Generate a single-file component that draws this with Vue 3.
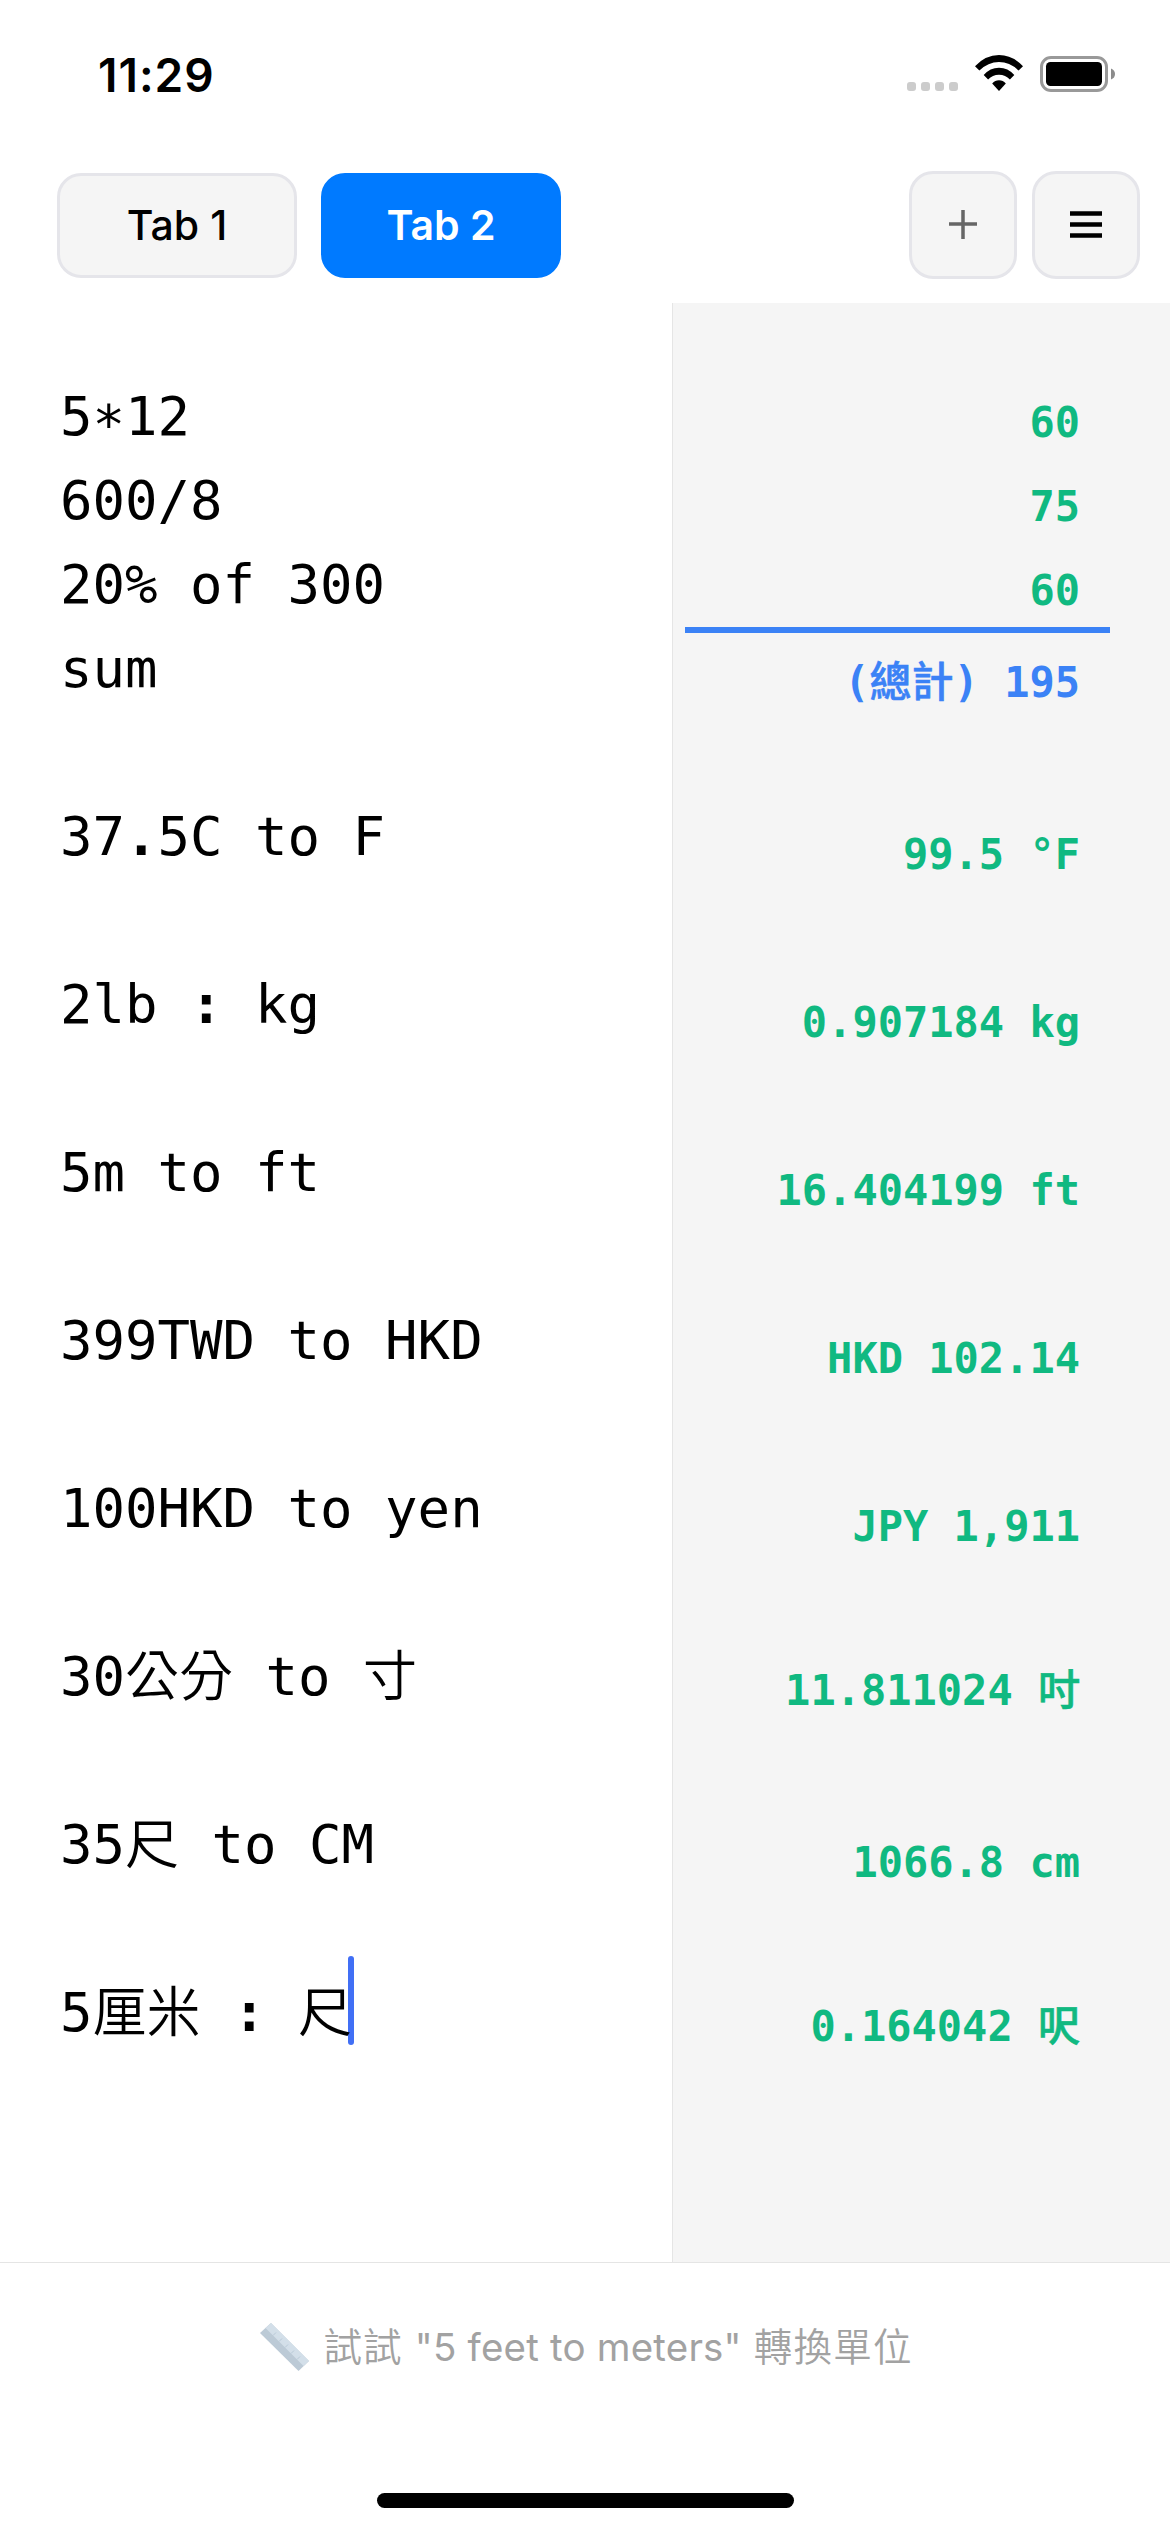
<script setup>
const tabs = [
  { id: 1, label: 'Tab 1', active: false },
  { id: 2, label: 'Tab 2', active: true },
]

const lines = [
  '5*12',
  '600/8',
  '20% of 300',
  'sum',
  '',
  '37.5C to F',
  '',
  '2lb : kg',
  '',
  '5m to ft',
  '',
  '399TWD to HKD',
  '',
  '100HKD to yen',
  '',
  '30公分 to 寸',
  '',
  '35尺 to CM',
  '',
  '5厘米 : 尺',
]

const results = [
  { text: '60' },
  { text: '75' },
  { text: '60' },
  { text: '(總計) 195', kind: 'total' },
  { text: '', kind: 'tall' },
  { text: '99.5 °F' },
  { text: '' },
  { text: '0.907184 kg' },
  { text: '' },
  { text: '16.404199 ft' },
  { text: '' },
  { text: 'HKD 102.14' },
  { text: '' },
  { text: 'JPY 1,911' },
  { text: '', kind: 'short' },
  { text: '11.811024 吋' },
  { text: '', kind: 'tall' },
  { text: '1066.8 cm' },
  { text: '', kind: 'short' },
  { text: '0.164042 呎' },
]

// Splits a line into runs so operators and Han characters can be styled apart.
function runs(text) {
  return text
    .split(/([.:*]|[\u4e00-\u9fff]+)/)
    .filter(Boolean)
    .map((part) => {
      let type = 'plain'
      if (part === '*') type = 'star'
      else if (part === '.' || part === ':') type = 'mark'
      else if (/[\u4e00-\u9fff]/.test(part)) type = 'han'
      return { part, type }
    })
}
</script>

<template>
  <div class="screen">
    <header class="status">
      <span class="time">11:29</span>
      <div class="indicators">
        <div class="dots"><i v-for="n in 4" :key="n"></i></div>
        <svg class="wifi" width="48" height="36" viewBox="0 0 48 36">
          <path d="M0 11.200Q10.500 0 24 0Q37.500 0 48 11.200L43.600 15.600Q35 7 24 7Q13 7 4.400 15.600Z" />
          <path d="M8.700 20Q15 12.700 24 12.700Q33 12.700 39.300 20L34.900 24.400Q30.500 19.700 24 19.700Q17.500 19.700 13.100 24.400Z" />
          <path d="M17.200 28.600Q20 25.300 24 25.300Q28 25.300 30.800 28.600L24 36Z" />
        </svg>
        <svg class="battery" width="75" height="36" viewBox="0 0 75 36">
          <rect x="1.500" y="1.500" width="65" height="33" rx="9.500" fill="none" stroke="#999" stroke-width="3" />
          <rect x="6" y="6" width="56" height="24" rx="4.500" />
          <path d="M71 12.500Q75 14 75 18Q75 22 71 23.500Z" fill="#8c8c8c" />
        </svg>
      </div>
    </header>

    <nav class="toolbar">
      <button v-for="tab in tabs" :key="tab.id" class="tab" :class="{ active: tab.active }">
        <span>{{ tab.label }}</span>
      </button>
      <div class="actions">
        <button class="action" aria-label="Add">
          <svg width="30" height="30" viewBox="0 0 30 30">
            <path d="M1 14H29M15 0V29" fill="none" stroke="#666" stroke-width="3.500" />
          </svg>
        </button>
        <button class="action" aria-label="Menu">
          <svg width="32" height="28" viewBox="0 0 32 28">
            <path d="M0 2.500H32M0 13.500H32M0 24.500H32" fill="none" stroke="#000" stroke-width="4.700" />
          </svg>
        </button>
      </div>
    </nav>

    <main class="sheet">
      <section class="editor">
        <div v-for="(line, i) in lines" :key="i" class="line">
          <span v-for="(run, j) in runs(line)" :key="j" :class="run.type">{{ run.part }}</span>
          <i v-if="i === lines.length - 1" class="caret"></i>
        </div>
      </section>
      <section class="results">
        <template v-for="(row, i) in results" :key="i">
          <div v-if="row.kind === 'total'" class="rule"></div>
          <div class="result" :class="row.kind">
            <span v-for="(run, j) in runs(row.text)" :key="j" :class="run.type">{{ run.part }}</span>
          </div>
        </template>
      </section>
    </main>

    <footer class="footer">
      <div class="hint">
        <svg class="ruler" width="49" height="48" viewBox="0 0 49 48">
          <path d="M0 10L11 0L49 38L38.500 48Z" fill="#bccad6" />
          <path d="M5.500 5L11 0L49 38L43.500 43Z" fill="#d3dfe9" />
          <path d="M13 12.500L16 9.500M19 18.500L22 15.500M25 24.500L28 21.500M31 30.500L34 27.500M37 36.500L40 33.500" stroke="#b9c9d7" stroke-width="1" />
        </svg>
        <span class="tip">試試 <span class="latin">"5 feet to meters"</span> 轉換單位</span>
      </div>
      <div class="home"></div>
    </footer>
  </div>
</template>

<style>
body {
  margin: 0;
  background: #fff;
}
</style>

<style scoped>
.screen {
  width: 1170px;
  height: 2532px;
  display: flex;
  flex-direction: column;
  overflow: hidden;
  background: #fff;
  color: #000;
  font-family: Inter, 'Noto Sans CJK TC', sans-serif;
}

.status {
  height: 171px;
  flex: none;
  display: flex;
  justify-content: space-between;
  align-items: flex-start;
  box-sizing: border-box;
  padding: 55px 55px 0 98px;
}

.time {
  font-size: 46px;
  font-weight: 600;
  line-height: 40px;
  letter-spacing: 1px;
}

.indicators {
  display: flex;
  align-items: flex-start;
}

.dots {
  display: flex;
  gap: 5px;
  margin: 27px 17px 0 0;
}

.dots i {
  width: 9px;
  height: 9px;
  border-radius: 3px;
  background: #ccc;
}

.wifi {
  margin-right: 17px;
}

.battery {
  margin-top: 1px;
}

.toolbar {
  flex: none;
  height: 132px;
  display: flex;
  align-items: flex-start;
  box-sizing: border-box;
  padding: 0 30px 0 57px;
}

button {
  display: flex;
  align-items: center;
  justify-content: center;
  box-sizing: border-box;
  margin: 0;
  padding: 0;
  border: 3px solid #e5e5ea;
  border-radius: 24px;
  background: #f5f5f5;
  color: #000;
  font-family: inherit;
}

.tab {
  width: 240px;
  height: 105px;
  margin: 2px 24px 0 0;
  padding-bottom: 2px;
  font-size: 41px;
  font-weight: 500;
}

.tab.active {
  border-color: #007aff;
  background: #007aff;
  color: #fff;
  font-weight: 600;
}

.actions {
  display: flex;
  gap: 15px;
  margin-left: auto;
}

.action {
  width: 108px;
  height: 108px;
}

.sheet {
  flex: none;
  height: 1959px;
  display: flex;
  font-family: 'DejaVu Sans Mono', 'Noto Sans CJK TC', monospace;
}

.editor {
  width: 672px;
  box-sizing: border-box;
  padding: 72px 0 0 60px;
  font-size: 54px;
}

.line {
  height: 84px;
  display: flex;
  line-height: 84px;
  white-space: pre;
}

.editor .mark {
  font-weight: 700;
}

.editor .han {
  position: relative;
  top: 1px;
  font-weight: 350;
}

.star {
  position: relative;
  top: 8px;
}

.caret {
  width: 6px;
  height: 89px;
  margin: -15px 0 0 -4px;
  border-radius: 3px;
  background: #416ff5;
}

.results {
  flex: 1;
  box-sizing: border-box;
  padding: 78px 60px 0 12px;
  border-left: 1px solid #e5e5e5;
  background: #f5f5f5;
  color: #10b981;
  font-size: 42px;
  font-weight: 700;
}

.result {
  height: 84px;
  display: flex;
  justify-content: flex-end;
  padding-right: 30px;
  line-height: 84px;
  white-space: pre;
}

.results .han {
  font-weight: 500;
  -webkit-text-stroke: 0.600px currentColor;
}

.result.tall {
  height: 88px;
}

.result.short {
  height: 80px;
}

.rule {
  height: 6px;
  margin: -6px 0 8px;
  background: #3b82f6;
}

.total {
  color: #3b82f6;
}

.footer {
  flex: 1;
  display: flex;
  flex-direction: column;
  align-items: center;
  justify-content: space-between;
  box-sizing: border-box;
  padding: 58px 0 24px;
  border-top: 1px solid #e5e5e5;
}

.hint {
  display: flex;
  align-items: flex-start;
  padding-left: 3px;
  color: #a2a2a2;
  font-size: 38.500px;
  line-height: 52px;
  white-space: pre;
}

.ruler {
  margin: 2px 14px 0 0;
}

.tip {
  letter-spacing: 1.200px;
  font-weight: 350;
}

.latin {
  letter-spacing: 0.200px;
  font-weight: 400;
}

.home {
  width: 417px;
  height: 15px;
  border-radius: 8px;
  background: #000;
}
</style>
